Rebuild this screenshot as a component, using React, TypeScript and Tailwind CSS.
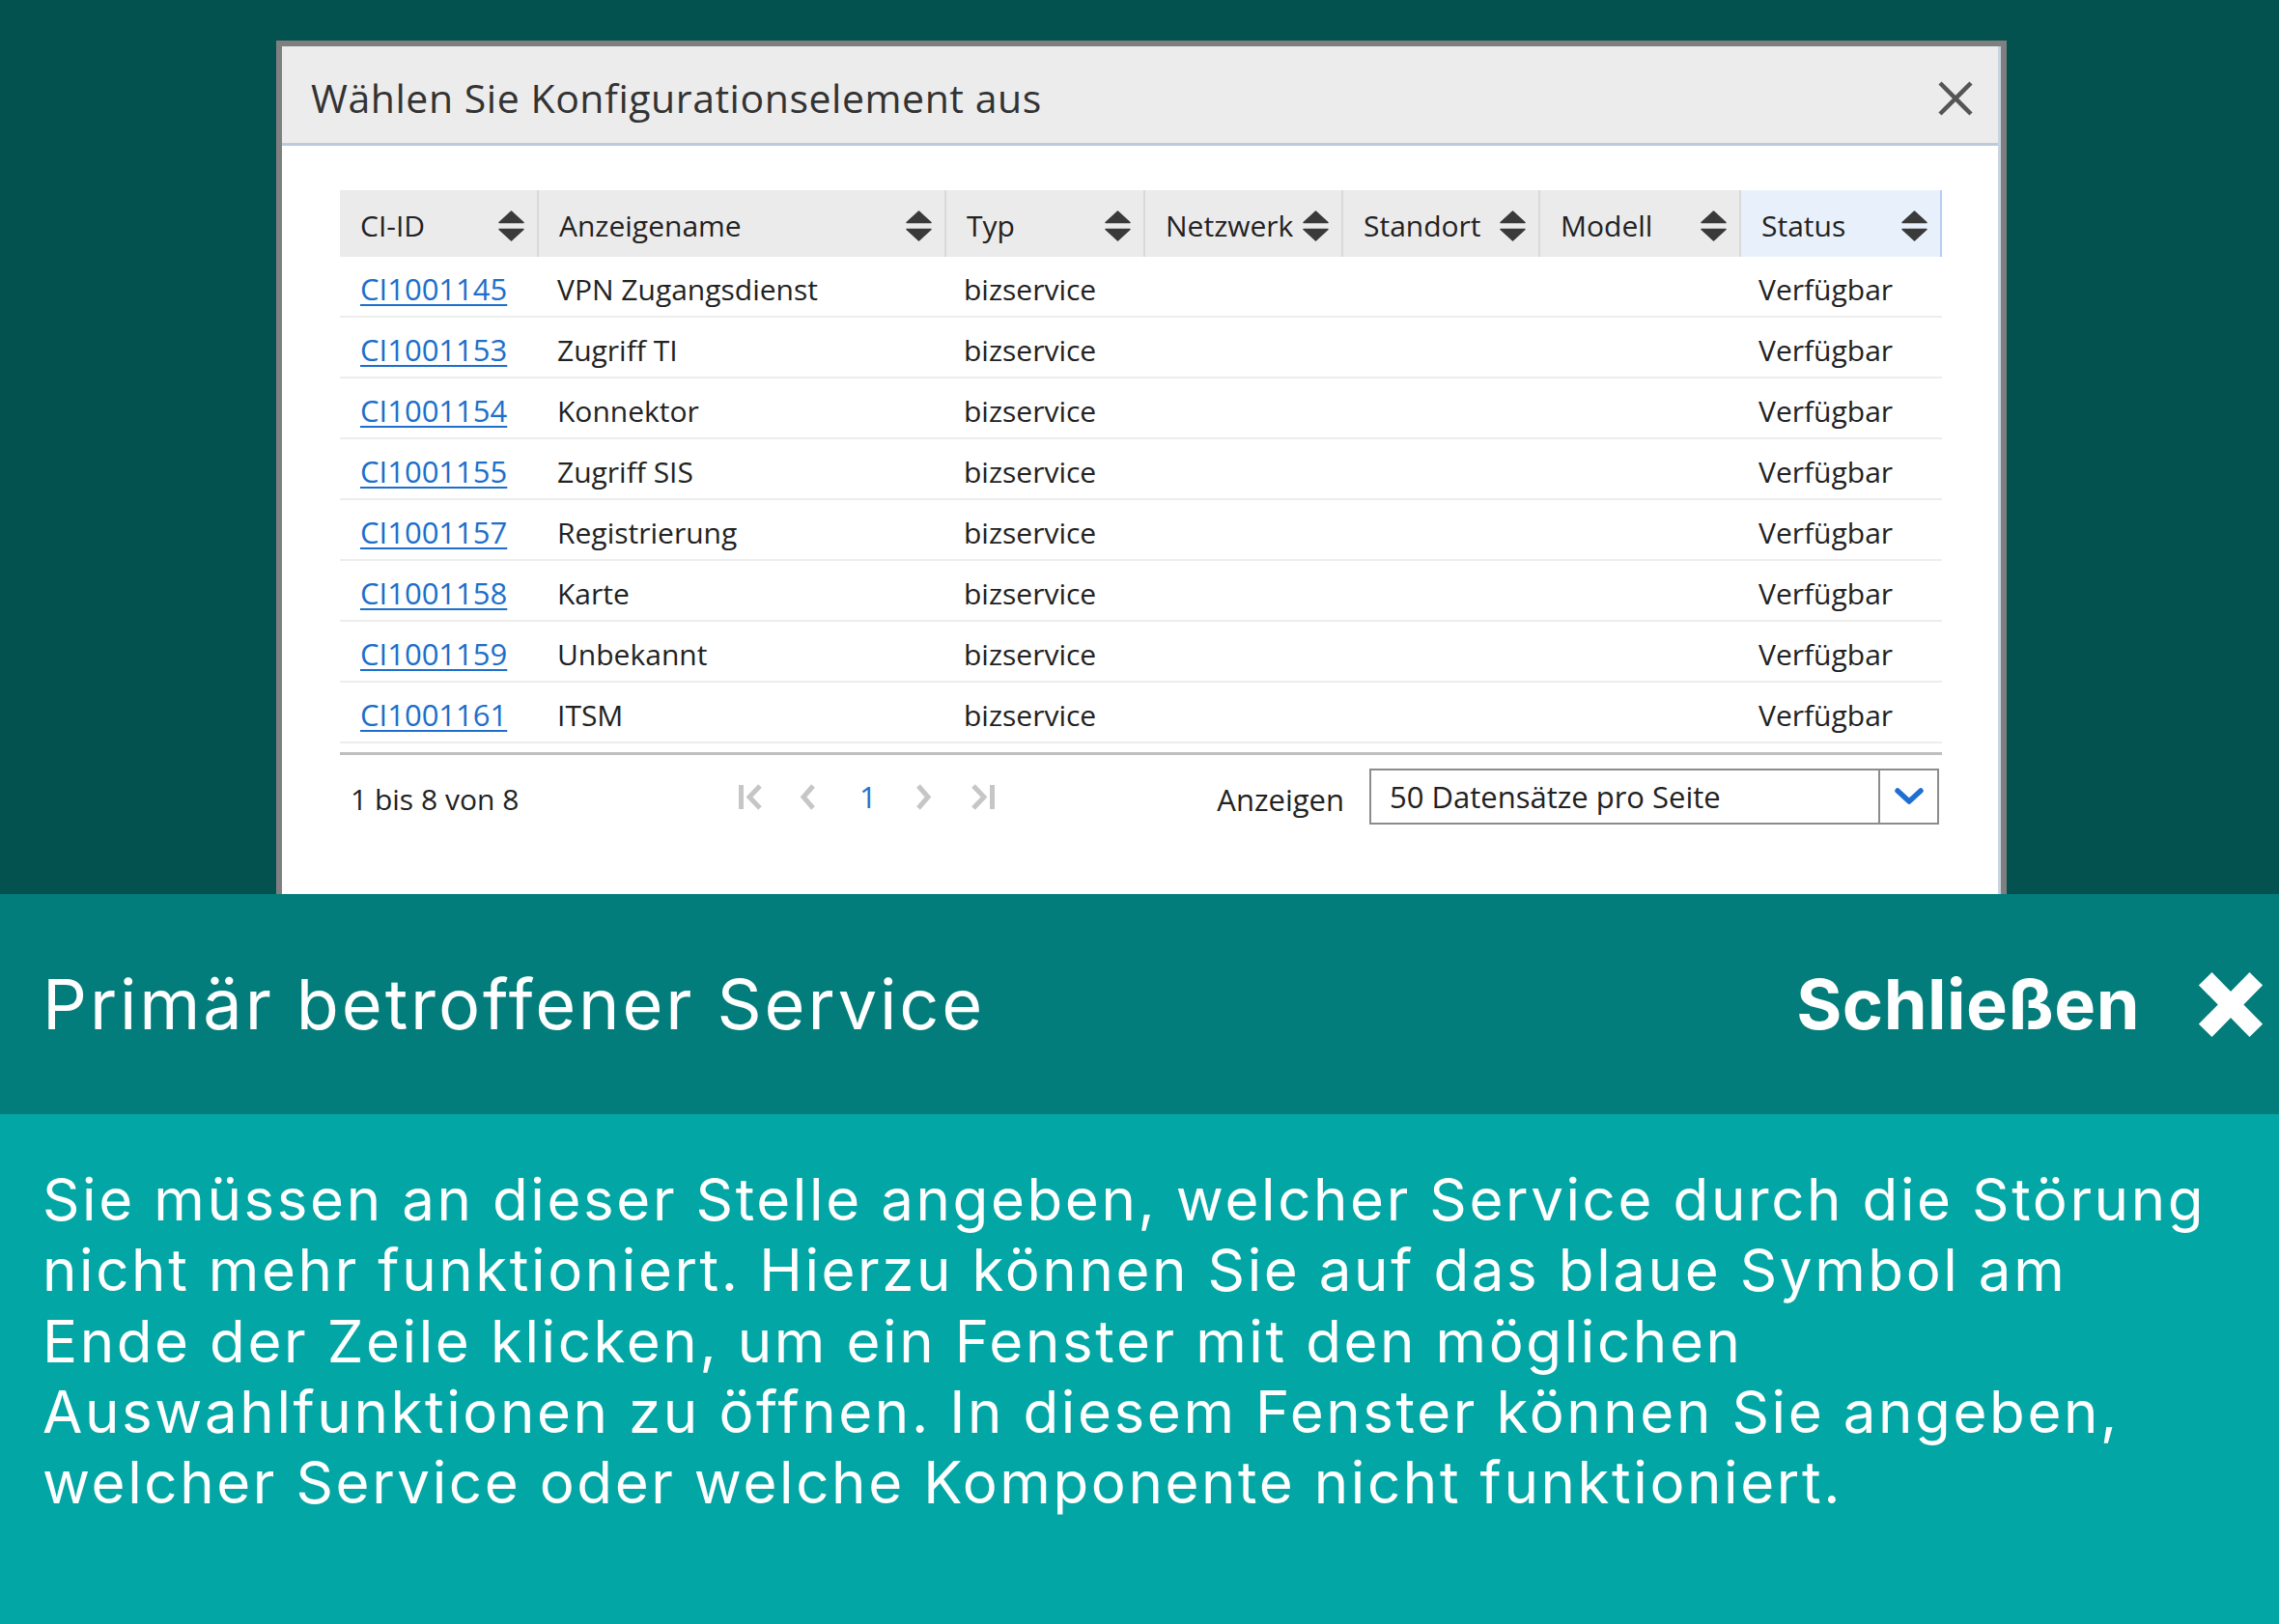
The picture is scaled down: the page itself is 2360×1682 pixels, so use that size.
import React from "react";

const rows: [string, string][] = [
  ["CI1001145", "VPN Zugangsdienst"],
  ["CI1001153", "Zugriff TI"],
  ["CI1001154", "Konnektor"],
  ["CI1001155", "Zugriff SIS"],
  ["CI1001157", "Registrierung"],
  ["CI1001158", "Karte"],
  ["CI1001159", "Unbekannt"],
  ["CI1001161", "ITSM"],
];

function SortIcon() {
  return (
    <svg width="27" height="32" viewBox="0 0 27 32" className="shrink-0">
      <path d="M13.5 1 L26 12.5 L1 12.5 Z" fill="#3a3a3a" strokeLinejoin="round" stroke="#3a3a3a" strokeWidth="1.5" />
      <path d="M1 19.5 L26 19.5 L13.5 31 Z" fill="#3a3a3a" strokeLinejoin="round" stroke="#3a3a3a" strokeWidth="1.5" />
    </svg>
  );
}

function HeadCell({ label, w, active }: { label: string; w: string; active?: boolean }) {
  return (
    <div
      className={
        "h-full flex items-center justify-between pl-[21px] pr-[13px] pt-[4px] border-r-2 " +
        w +
        (active ? " bg-[#e8f1fb] border-[#b4cfee]" : " border-[#d9d9d9]")
      }
    >
      <span>{label}</span>
      <SortIcon />
    </div>
  );
}

function Chevron({ dir }: { dir: "l" | "r" }) {
  return (
    <svg width="17" height="27" viewBox="0 0 17 27" className="shrink-0">
      <path
        d={dir === "l" ? "M14 2 L4 13.5 L14 25" : "M3 2 L13 13.5 L3 25"}
        fill="none"
        stroke="#c6c6c6"
        strokeWidth="5"
      />
    </svg>
  );
}

function Edge({ dir }: { dir: "l" | "r" }) {
  return (
    <svg width="25" height="27" viewBox="0 0 25 27" className="shrink-0">
      {dir === "l" ? (
        <>
          <path d="M2.5 1 L2.5 26" stroke="#c6c6c6" strokeWidth="5" />
          <path d="M22 2 L11 13.5 L22 25" fill="none" stroke="#c6c6c6" strokeWidth="5" />
        </>
      ) : (
        <>
          <path d="M3 2 L14 13.5 L3 25" fill="none" stroke="#c6c6c6" strokeWidth="5" />
          <path d="M22.5 1 L22.5 26" stroke="#c6c6c6" strokeWidth="5" />
        </>
      )}
    </svg>
  );
}

export default function App() {
  return (
    <div className="w-[2360px] h-[1682px] overflow-hidden flex flex-col">
      {/* top area with dialog */}
      <div className="h-[926px] shrink-0 bg-[#03524f] pt-[42px] pl-[286px] overflow-hidden">
        <div
          className="w-[1792px] h-[900px] border-[6px] border-b-0 border-[#7f7f7f] bg-white flex flex-col text-[#222]"
          style={{ fontFamily: '"Open Sans", "Noto Sans", sans-serif' }}
        >
          <div className="flex-1 flex flex-col border-r-[3px] border-[#c8d4e1]">
            {/* header */}
            <div className="h-[103px] shrink-0 bg-[#ececec] border-b-[3px] border-[#bccbdb] flex items-center justify-between pl-[30px] pr-[25px] pt-[8px]">
              <span className="text-[41px] text-[#333] tracking-[0.55px]">Wählen Sie Konfigurationselement aus</span>
              <svg width="38" height="38" viewBox="0 0 38 38">
                <path d="M3 3 L35 35 M35 3 L3 35" stroke="#555" strokeWidth="4.5" />
              </svg>
            </div>
            {/* body */}
            <div className="pl-[60px] pt-[46px]">
              <div className="w-[1659px] text-[30px]">
                <div className="h-[69px] bg-[#ebebeb] flex">
                  <HeadCell label="CI-ID" w="w-[206px]" />
                  <HeadCell label="Anzeigename" w="w-[422px]" />
                  <HeadCell label="Typ" w="w-[206px]" />
                  <HeadCell label="Netzwerk" w="w-[205px]" />
                  <HeadCell label="Standort" w="w-[204px]" />
                  <HeadCell label="Modell" w="w-[208px]" />
                  <HeadCell label="Status" w="w-[208px]" active />
                </div>
                {rows.map(([id, name]) => (
                  <div key={id} className="h-[63px] border-b-2 border-[#ededed] flex items-center pt-[5px]">
                    <div className="w-[206px] pl-[21px]">
                      <span className="text-[#1d6fcb] underline underline-offset-[4px] decoration-[2px] text-[31px]">{id}</span>
                    </div>
                    <div className="w-[422px] pl-[19px]">{name}</div>
                    <div className="w-[206px] pl-[18px]">bizservice</div>
                    <div className="w-[205px]" />
                    <div className="w-[204px]" />
                    <div className="w-[208px]" />
                    <div className="w-[208px] pl-[18px]">Verfügbar</div>
                  </div>
                ))}
                {/* footer */}
                <div className="mt-[9px] border-t-[3px] border-[#bfbfbf] pt-[14px] pr-[3px] flex items-center">
                  <div className="w-[413px] pl-[11px] pt-[4px]">1 bis 8 von 8</div>
                  <div className="flex items-center">
                    <Edge dir="l" />
                    <div className="w-[38px]" />
                    <Chevron dir="l" />
                    <div className="w-[45px]" />
                    <span className="text-[#2472cc] leading-none w-[18px] text-[31px]">1</span>
                    <div className="w-[40px]" />
                    <Chevron dir="r" />
                    <div className="w-[40px]" />
                    <Edge dir="r" />
                  </div>
                  <div className="ml-auto flex items-center gap-[26px]">
                    <span className="pt-[6px] text-[31px]">Anzeigen</span>
                    <div className="h-[58px] w-[590px] border-2 border-[#8c8c8c] flex">
                      <div className="flex-1 flex items-center pl-[19px] text-[31px]">50 Datensätze pro Seite</div>
                      <div className="w-[61px] border-l-2 border-[#8c8c8c] flex items-center justify-center">
                        <svg width="30" height="18" viewBox="0 0 30 18">
                          <path d="M3 3 L15 14 L27 3" fill="none" stroke="#1f6fd3" strokeWidth="5.5" strokeLinecap="round" strokeLinejoin="round" />
                        </svg>
                      </div>
                    </div>
                  </div>
                </div>
              </div>
            </div>
          </div>
        </div>
      </div>

      {/* title band */}
      <div
        className="h-[228px] shrink-0 bg-[#037d7b] flex items-center justify-between pl-[44px] pr-[17px] text-white"
        style={{ fontFamily: 'Inter, "Open Sans", sans-serif' }}
      >
        <span className="text-[72px] font-normal tracking-[2.9px]">Primär betroffener Service</span>
        <div className="flex items-center gap-[61px]">
          <span className="text-[72px] font-bold tracking-[0.5px]">Schließen</span>
          <svg width="66" height="67" viewBox="0 0 66 67">
            <path d="M6.75 6.75 L59.25 60.25 M59.25 6.75 L6.75 60.25" stroke="#fff" strokeWidth="19" />
          </svg>
        </div>
      </div>

      {/* description */}
      <div
        className="flex-1 bg-[#02a7a5] pl-[44px] pt-[52px] text-white text-[60px] leading-[73.3px] tracking-[2.6px]"
        style={{ fontFamily: 'Inter, "Open Sans", sans-serif' }}
      >
        <p>Sie müssen an dieser Stelle angeben, welcher Service durch die Störung</p>
        <p>nicht mehr funktioniert. Hierzu können Sie auf das blaue Symbol am</p>
        <p>Ende der Zeile klicken, um ein Fenster mit den möglichen</p>
        <p>Auswahlfunktionen zu öffnen. In diesem Fenster können Sie angeben,</p>
        <p>welcher Service oder welche Komponente nicht funktioniert.</p>
      </div>
    </div>
  );
}
